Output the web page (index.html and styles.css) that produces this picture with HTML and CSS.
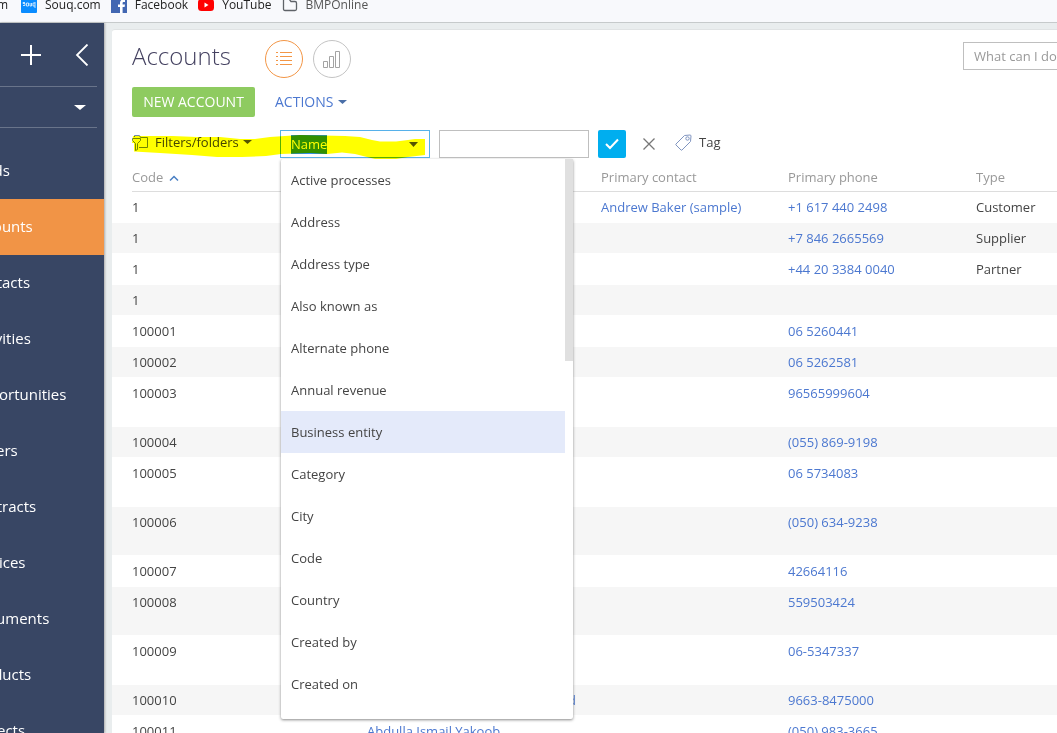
FILE: index.html
```html
<!DOCTYPE html>
<html lang="en">
<head>
    <meta charset="UTF-8">
    <meta name="viewport" content="width=device-width, initial-scale=1.0">
    <link rel="stylesheet" href="styles.css">
    <title>Accounts</title>
</head>
<body>

    <div class="bookmarks">
        <a href="#" class="first">m</a>
        <a href="#">
            <svg width="16" height="16" viewBox="0 0 16 16"><rect width="16" height="16" rx="1" fill="#0a8cff"/><path d="M2 8.500h2v-2h-2v-1h2M5.500 6h2v3h-2zM9 6v3h1.500v-3M14 6h-2v3h2M14 5v6" fill="none" stroke="#d8edff" stroke-width=".9"/></svg>
            Souq.com
        </a>
        <a href="#">
            <svg width="16" height="16" viewBox="0 0 16 16"><rect width="16" height="16" fill="#4267b2"/><path d="M9 16V10H7V7.500h2V6c0-2.200 1.200-3.500 3.200-3.500H14V5h-1.200c-.9 0-1.200.4-1.200 1.200v1.300H14L13.600 10h-2v6z" fill="#fff"/></svg>
            Facebook
        </a>
        <a href="#">
            <svg width="16" height="16" viewBox="0 0 16 16"><rect x="0" y="2" width="16" height="12" rx="3.500" fill="#f00"/><path d="M6.500 5.500v5l4-2.500z" fill="#fff"/></svg>
            YouTube
        </a>
        <a href="#" class="folder">
            <svg width="16" height="16" viewBox="0 0 16 16"><path d="M1.500 3.500q0-1.500 1.500-1.500h4l2 2.500h4q1.500 0 1.500 1.500v6q0 1.500-1.500 1.500h-10q-1.500 0-1.500-1.500z" fill="none" stroke="#5f6368" stroke-width="1.300"/></svg>
            BMPOnline
        </a>
    </div>

    <div class="page">

        <div class="sidebar">
            <div class="side-top">
                <button aria-label="Add">
                    <svg width="20" height="20" viewBox="0 0 20 20"><path d="M10 0v20M0 10h20" stroke="#fff" stroke-width="2"/></svg>
                </button>
                <button aria-label="Collapse">
                    <svg width="14" height="22" viewBox="0 0 14 22"><path d="M12.500 .5L2 11l10.500 10.500" fill="none" stroke="#fff" stroke-width="1.800"/></svg>
                </button>
            </div>
            <div class="side-menu">
                <button aria-label="Workplace">
                    <svg width="12" height="5" viewBox="0 0 12 5"><path d="M0 0h12L6 5z" fill="#fff"/></svg>
                </button>
            </div>
            <nav>
                <a href="#">Leads</a>
                <a href="#" class="active">Accounts</a>
                <a href="#">Contacts</a>
                <a href="#">Activities</a>
                <a href="#">Opportunities</a>
                <a href="#">Orders</a>
                <a href="#">Contracts</a>
                <a href="#">Invoices</a>
                <a href="#">Documents</a>
                <a href="#">Products</a>
                <a href="#">Projects</a>
            </nav>
        </div>

        <main class="panel">

            <div class="header">
                <h1>Accounts</h1>
                <button class="round selected" aria-label="List view">
                    <svg width="18" height="14" viewBox="0 0 18 14"><path d="M1 .5h2M5 .5h12M1 4.500h2M5 4.500h12M1 8.500h2M5 8.500h12M1 12.500h2M5 12.500h12" stroke="#f39646"/></svg>
                </button>
                <button class="round" aria-label="Analytics view">
                    <svg width="18" height="18" viewBox="0 0 18 18"><path d="M.5 11.500h4v6h-4zM6.500 6.500h4v11h-4zM12.500 1.500h4v16h-4z" fill="none" stroke="#a3a3a3"/></svg>
                </button>
                <input class="search" type="text" placeholder="What can I do for you?" aria-label="What can I do for you?">
            </div>

            <div class="actions">
                <button class="new-account">NEW ACCOUNT</button>
                <button class="link-button">ACTIONS
                    <svg width="9" height="4" viewBox="0 0 9 4"><path d="M0 0h9L4.500 4z" fill="#4a6fa8"/></svg>
                </button>
            </div>

            <div class="filters">
                <button class="filter-button">
                    <svg width="17" height="17" viewBox="0 0 17 17"><path d="M2.500 3V1.500h5l1 2h7v10H7M.5 4.500h8v2L5.500 9.500V15.500l-2 1V9.500L.5 6.500z" fill="none" stroke="#7186ad"/></svg>
                    Filters/folders
                    <svg class="caret" width="9" height="4" viewBox="0 0 9 4"><path d="M0 0h9L4.500 4z" fill="#555"/></svg>
                </button>

                <div class="combo">
                    <input type="text" value="Name" aria-label="Filter column">
                    <svg width="9" height="5" viewBox="0 0 9 5"><path d="M0 0h9L4.500 5z" fill="#555"/></svg>
                    <div class="dropdown">
                        <ul>
                            <li>Active processes</li>
                            <li>Address</li>
                            <li>Address type</li>
                            <li>Also known as</li>
                            <li>Alternate phone</li>
                            <li>Annual revenue</li>
                            <li class="hovered">Business entity</li>
                            <li>Category</li>
                            <li>City</li>
                            <li>Code</li>
                            <li>Country</li>
                            <li>Created by</li>
                            <li>Created on</li>
                        </ul>
                        <div class="scrollbar"></div>
                    </div>
                </div>

                <input class="filter-value" type="text" aria-label="Filter value">
                <button class="apply" aria-label="Apply">
                    <svg width="14" height="12" viewBox="0 0 14 12"><path d="M1 6l4 4L13 1.500" fill="none" stroke="#fff" stroke-width="2"/></svg>
                </button>
                <button class="clear" aria-label="Clear">
                    <svg width="12" height="12" viewBox="0 0 12 12"><path d="M.5 .5l11 11M11.500 .5l-11 11" stroke="#777" stroke-width="1.300"/></svg>
                </button>
                <button class="tag">
                    <svg width="17" height="17" viewBox="0 0 17 17"><path d="M9.500 1.500l5.500-.5q1 0 1 1l-.5 5.500-8.500 8.500q-.5.500-1 0l-5-5q-.5-.5 0-1z" fill="none" stroke="#8095c0"/><circle cx="12.500" cy="4.500" r="1.700" fill="none" stroke="#8095c0"/></svg>
                    Tag
                </button>

                <!-- yellow marker stroke -->
                <svg class="marker" width="296" height="32" viewBox="0 0 296 32"><path d="M1 6H40L65 7L88 7L108 9H123L138 7L168 5L213 6L228 7L240 10L248 11.500H264L276 10L283 9H293V25L276 27L264 29H243L223 24L210 22.500L195 24L178 23L149 24L134 26L110 27H85L60 25L28 23L2 21.500V13H0z" fill="#ff0"/></svg>
            </div>

            <table>
                <thead>
                    <tr>
                        <th class="code">Code
                            <svg width="10" height="6" viewBox="0 0 10 6"><path d="M1 5.500l4-4 4 4" fill="none" stroke="#4a80c4" stroke-width="1.500"/></svg>
                        </th>
                        <th class="name"></th>
                        <th class="contact">Primary contact</th>
                        <th class="phone">Primary phone</th>
                        <th>Type</th>
                    </tr>
                </thead>
                <tbody>
                    <tr><td>1</td><td></td><td><a href="#">Andrew Baker (sample)</a></td><td><a href="#">+1 617 440 2498</a></td><td>Customer</td></tr>
                    <tr><td>1</td><td></td><td></td><td><a href="#">+7 846 2665569</a></td><td>Supplier</td></tr>
                    <tr><td>1</td><td></td><td></td><td><a href="#">+44 20 3384 0040</a></td><td>Partner</td></tr>
                    <tr><td>1</td><td></td><td></td><td></td><td></td></tr>
                    <tr><td>100001</td><td></td><td></td><td><a href="#">06 5260441</a></td><td></td></tr>
                    <tr><td>100002</td><td></td><td></td><td><a href="#">06 5262581</a></td><td></td></tr>
                    <tr class="tall"><td>100003</td><td></td><td></td><td><a href="#">96565999604</a></td><td></td></tr>
                    <tr><td>100004</td><td></td><td></td><td><a href="#">(055) 869-9198</a></td><td></td></tr>
                    <tr class="tall"><td>100005</td><td></td><td></td><td><a href="#">06 5734083</a></td><td></td></tr>
                    <tr class="tall"><td>100006</td><td></td><td></td><td><a href="#">(050) 634-9238</a></td><td></td></tr>
                    <tr><td>100007</td><td></td><td></td><td><a href="#">42664116</a></td><td></td></tr>
                    <tr class="tall"><td>100008</td><td></td><td></td><td><a href="#">559503424</a></td><td></td></tr>
                    <tr class="tall"><td>100009</td><td></td><td></td><td><a href="#">06-5347337</a></td><td></td></tr>
                    <tr><td>100010</td><td><a href="#">Abdulla Ahmed Hassan Isa Rashed</a></td><td></td><td><a href="#">9663-8475000</a></td><td></td></tr>
                    <tr><td>100011</td><td><a href="#">Abdulla Ismail Yakoob</a></td><td></td><td><a href="#">(050) 983-3665</a></td><td></td></tr>
                </tbody>
            </table>

        </main>
    </div>

</body>
</html>
```
FILE: styles.css
```css
* {
    box-sizing: border-box;
}

body {
    margin: 0;
    height: 100vh;
    overflow: hidden;
    display: flex;
    flex-direction: column;
    font-family: "Open Sans", "Noto Sans", sans-serif;
    font-size: 13px;
    line-height: 18px;
    color: #444;
    background-color: #e9edee;
}

button, input {
    font: inherit;
    color: inherit;
    margin: 0;
    padding: 0;
    border: none;
    outline: none;
    background: none;
}

a {
    color: #4c78d0;
    text-decoration: none;
}

svg {
    flex: none;
}

/* browser bookmarks */

.bookmarks {
    display: flex;
    flex: none;
    gap: 10px;
    height: 23px;
    font-size: 12px;
    line-height: 16px;
    background-color: #f8f9fc;
    border-bottom: 1px solid #c6cacb;
    overflow: hidden;
}

.bookmarks a {
    display: flex;
    gap: 8px;
    height: 16px;
    margin-top: -3px;
    color: #222;
}

.bookmarks .first {
    width: 8px;
    margin-right: 3px;
    justify-content: flex-end;
}

.bookmarks .folder {
    color: #555;
}

.page {
    display: flex;
    flex: 1;
    min-height: 0;
}

/* sidebar */

.sidebar {
    flex: none;
    width: 104px;
    margin-right: 8px;
    background-color: #384664;
    box-shadow: 1px 0 2px #aaa;
}

.side-top, .side-menu {
    display: flex;
    align-items: center;
    justify-content: space-between;
    margin-right: 7px;
    border-bottom: 1px solid #69748a;
}

.side-top {
    height: 64px;
    padding: 0 8px 0 21px;
}

.side-menu {
    height: 41px;
    justify-content: flex-end;
    padding-right: 11px;
}

.side-top button, .side-menu button {
    display: flex;
}

nav {
    margin-top: 15px;
}

nav a {
    display: block;
    height: 56px;
    margin-left: -31px;
    font-size: 15px;
    line-height: 54px;
    color: #fff;
}

nav .active {
    margin-left: -104px;
    padding-left: 73px;
    background-color: #f19446;
}

/* main panel */

.panel {
    flex: 1;
    min-width: 0;
    margin-top: 6px;
    padding-left: 20px;
    overflow: hidden;
    background-color: #fff;
    border-top: 1px solid #e0e3e4;
    border-top-left-radius: 3px;
}

.header {
    display: flex;
    align-items: center;
    gap: 10px;
    height: 57px;
}

h1 {
    width: 123px;
    margin: 0;
    font-size: 24px;
    font-weight: 300;
    line-height: 32px;
    color: #444160;
    padding-bottom: 5px;
}

.round {
    display: flex;
    align-items: center;
    justify-content: center;
    width: 38px;
    height: 38px;
    border: 1px solid #c4c4c4;
    border-radius: 50%;
}

.round.selected {
    border-color: #f39646;
}

.search {
    width: 94px;
    height: 28px;
    margin: 0 0 5px auto;
    padding-left: 10px;
    border: 1px solid #bfbfbf;
    border-right: none;
}

.search::placeholder {
    color: #999;
}

.actions {
    display: flex;
    gap: 20px;
}

.new-account {
    width: 123px;
    height: 30px;
    font-size: 14px;
    color: #fff;
    background-color: #8ecb60;
    border-radius: 2px;
}

.link-button {
    display: flex;
    align-items: center;
    gap: 5px;
    font-size: 14px;
    color: #4c78d0;
}

/* filter bar */

.filters {
    position: relative;
    display: flex;
    margin-top: 13px;
}

.filter-button {
    display: flex;
    align-items: center;
    gap: 6px;
    width: 148px;
    height: 24px;
}

.filter-button .caret {
    margin-left: -2px;
}

.combo {
    position: relative;
    display: flex;
    align-items: center;
    justify-content: space-between;
    width: 150px;
    height: 28px;
    padding: 0 11px 0 10px;
    border: 1px solid #56b1ea;
}

.combo input {
    width: 36px;
    height: 19px;
    color: #fff;
    background-color: #3390ff;
}

.dropdown {
    position: absolute;
    z-index: 1;
    top: 28px;
    left: 0;
    display: flex;
    width: 292px;
    height: 560px;
    background-color: #fff;
    border-radius: 2px;
    box-shadow: 0 1px 3px #888;
}

.dropdown ul {
    flex: 1;
    margin: 0;
    padding: 0;
    list-style: none;
}

.dropdown li {
    padding: 12px 10px;
}

.dropdown .hovered {
    background-color: #e4eafa;
}

.scrollbar {
    width: 8px;
    height: 202px;
    background-color: #e0e0e0;
}

.filter-value {
    width: 150px;
    height: 28px;
    margin: 0 9px;
    border: 1px solid #bfbfbf;
}

.apply, .clear, .tag {
    display: flex;
    align-items: center;
    justify-content: center;
    height: 28px;
}

.apply {
    width: 28px;
    background-color: #00aeef;
    border-radius: 2px;
}

.clear {
    width: 46px;
}

.tag {
    gap: 7px;
    height: 24px;
    margin-left: 3px;
}

.marker {
    position: absolute;
    z-index: 2;
    top: 0;
    left: 0;
    mix-blend-mode: multiply;
    pointer-events: none;
}

/* accounts table */

table {
    width: 100%;
    margin-top: 5px;
    table-layout: fixed;
    border-spacing: 0 1px;
}

/* the rule sits in the spacing under the header */
th {
    height: 27px;
    padding: 0 0 1px;
    font-weight: normal;
    text-align: left;
    color: #999;
    box-shadow: 0 1px #ddd;
}

th svg {
    margin: 0 0 1px 2px;
}

.code {
    width: 235px;
}

.name {
    width: 234px;
}

.contact {
    width: 187px;
}

.phone {
    width: 188px;
}

td {
    height: 30px;
    padding: 6px 0;
    vertical-align: top;
    white-space: nowrap;
}

.tall td {
    height: 48px;
}

tbody tr:nth-child(even) td {
    background-color: #f6f6f6;
}

/* carries the stripe over the panel's left padding */
tbody tr:nth-child(even) td:first-child {
    box-shadow: -20px 0 #f6f6f6;
}
```
